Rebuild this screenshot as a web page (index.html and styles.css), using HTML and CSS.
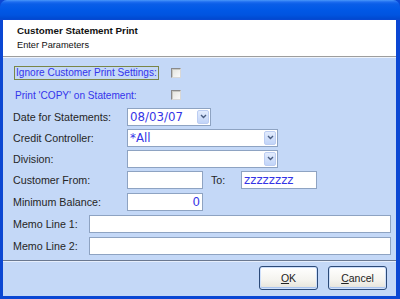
FILE: index.html
```html
<!DOCTYPE html>
<html>
<head>
<meta charset="utf-8">
<link rel="stylesheet" href="styles.css">
</head>
<body>
<div class="window">
  <div class="titlebar"></div>
  <div class="frame">
    <div class="header">
      <div class="h-title">Customer Statement Print</div>
      <div class="h-sub">Enter Parameters</div>
    </div>
    <div class="header-rule"></div>
    <div class="params">
      <div class="row r23">
        <div class="lbl lbl-check"><span class="focus blue">Ignore Customer Print Settings:</span></div>
        <span class="check"></span>
      </div>
      <div class="row r22">
        <div class="lbl lbl-check"><span class="blue pad2">Print 'COPY' on Statement:</span></div>
        <span class="check"></span>
      </div>
      <div class="row r21">
        <div class="lbl">Date for Statements:</div>
        <div class="combo w-date"><span class="val">08/03/07</span><span class="drop"><svg width="7" height="5" viewBox="0 0 7 5"><path d="M1 1 L3.5 3.5 L6 1" fill="none" stroke="#4a5d80" stroke-width="1.4"/></svg></span></div>
      </div>
      <div class="row r21">
        <div class="lbl">Credit Controller:</div>
        <div class="combo w-combo"><span class="val">*All</span><span class="drop"><svg width="7" height="5" viewBox="0 0 7 5"><path d="M1 1 L3.5 3.5 L6 1" fill="none" stroke="#4a5d80" stroke-width="1.4"/></svg></span></div>
      </div>
      <div class="row r21">
        <div class="lbl">Division:</div>
        <div class="combo w-combo"><span class="val"></span><span class="drop"><svg width="7" height="5" viewBox="0 0 7 5"><path d="M1 1 L3.5 3.5 L6 1" fill="none" stroke="#4a5d80" stroke-width="1.4"/></svg></span></div>
      </div>
      <div class="row r22">
        <div class="lbl">Customer From:</div>
        <div class="field w-short"></div>
        <div class="lbl lbl-to">To:</div>
        <div class="field w-short"><span class="val">zzzzzzzz</span></div>
      </div>
      <div class="row r22">
        <div class="lbl">Minimum Balance:</div>
        <div class="field w-short right"><span class="val">0</span></div>
      </div>
      <div class="row r22">
        <div class="lbl lbl-memo">Memo Line 1:</div>
        <div class="field w-memo"></div>
      </div>
      <div class="row r22">
        <div class="lbl lbl-memo">Memo Line 2:</div>
        <div class="field w-memo"></div>
      </div>
    </div>
    <div class="footer">
      <button class="btn default"><u>O</u>K</button>
      <button class="btn"><u>C</u>ancel</button>
    </div>
  </div>
</div>
</body>
</html>
```

FILE: styles.css
```css
html, body {
  margin: 0;
  padding: 0;
}
body {
  width: 400px;
  height: 299px;
  overflow: hidden;
  font-family: "Liberation Sans", Arial, sans-serif;
  background: #0b47d3;
}
.window {
  width: 400px;
  height: 299px;
  display: flex;
  flex-direction: column;
  background: #0b47d3;
  border-radius: 7px 7px 0 0;
  overflow: hidden;
}
.titlebar {
  height: 20px;
  flex: none;
  background: linear-gradient(#4a97fa 0, #1d6cf0 2px, #0a5ee8 4px, #0058e6 10px, #0054e0 15px, #0049d0 19px, #0b47d3 20px);
}
.frame {
  flex: 1;
  display: flex;
  flex-direction: column;
  border-style: solid;
  border-color: #0b47d3;
  border-width: 0 4px 3px 3px;
  background: #c4d8f7;
  min-height: 0;
}
.header {
  height: 36px;
  box-sizing: border-box;
  background: #fff;
  padding: 5px 0 0 14px;
  color: #111;
}
.h-title {
  font-weight: bold;
  font-size: 9.8px;
  line-height: 12px;
}
.h-sub {
  font-size: 9.2px;
  line-height: 12px;
  margin-top: 2px;
}
.header-rule {
  height: 2px;
  background: linear-gradient(#9d9d9d 50%, #eef3fb 50%);
}
.params {
  padding: 3px 0 3px 10px;
  display: flex;
  flex-direction: column;
}
.row {
  display: flex;
  align-items: center;
}
.r23 { height: 23px; }
.r22 { height: 22px; }
.r21 { height: 21px; }
.lbl {
  width: 114px;
  flex: none;
  font-size: 10.7px;
  color: #262626;
  white-space: nowrap;
}
.lbl-check { width: 158px; }
.lbl-memo { width: 76px; }
.lbl-to { width: 30px; margin-left: 8px; }
.blue { color: #3434ec; font-size: 10.1px; }
.pad2 { padding-left: 2px; }
.focus {
  display: inline-block;
  margin-left: 1px;
  border: 1px solid #7a8646;
  padding: 0 1px 0 1px;
  height: 12px;
  line-height: 12px;
}
.check {
  width: 8px;
  height: 8px;
  border: 1px solid #8a8a8a;
  border-right-color: #d8d8d8;
  border-bottom-color: #d8d8d8;
  background: linear-gradient(135deg, #e2e2dc, #fafafa);
  box-shadow: inset 1px 1px 0 #c8c8c2;
}
.combo, .field {
  height: 18px;
  box-sizing: border-box;
  border: 1px solid #8ea3c2;
  background: #fff;
  display: flex;
  align-items: center;
  flex: none;
}
.val {
  flex: 1;
  font-family: "DejaVu Sans", Verdana, sans-serif;
  font-size: 11.8px;
  color: #3434e6;
  padding-left: 2px;
  line-height: 16px;
  white-space: nowrap;
  overflow: hidden;
}
.right .val {
  text-align: right;
  padding-right: 2px;
}
.drop {
  width: 12px;
  height: 14px;
  margin-right: 1px;
  box-sizing: border-box;
  border: 1px solid #bccdf2;
  border-radius: 2px;
  background: linear-gradient(#e3ecfd, #c1d4f8);
  display: flex;
  align-items: center;
  justify-content: center;
  flex: none;
}
.w-date { width: 84px; }
.w-combo { width: 151px; }
.w-short { width: 76px; }
.w-memo { width: 302px; }
.footer {
  flex: 1;
  border-top: 1px solid #6a7890;
  box-shadow: inset 0 1px 0 #e6eefc;
  display: flex;
  justify-content: flex-end;
  align-items: flex-start;
  gap: 10px;
  padding: 5px 9px 0 0;
}
.btn {
  width: 59px;
  height: 24px;
  border: 1px solid #2c4a78;
  border-radius: 3px;
  background: linear-gradient(#ffffff, #f4f3ee 60%, #e4e2d9);
  box-shadow: inset 0 0 0 1px #cfe0fb, inset 0 -1px 0 1px #a9c4ef;
  font-family: "Liberation Sans", Arial, sans-serif;
  font-size: 10.5px;
  color: #222;
  padding: 0;
}
.btn u {
  text-decoration: underline;
}
```
